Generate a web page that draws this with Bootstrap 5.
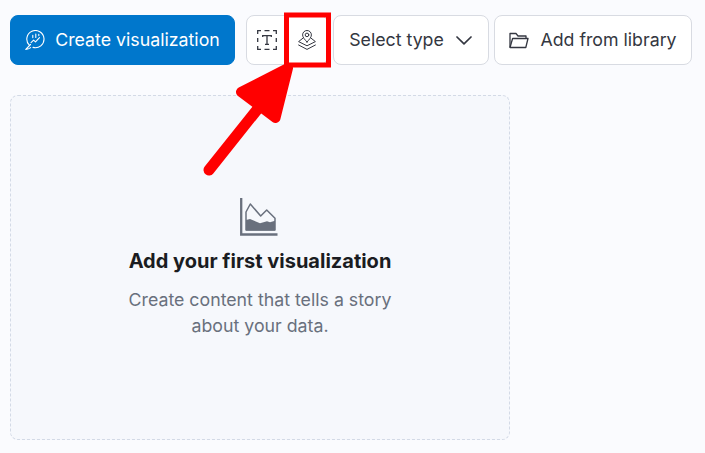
<!DOCTYPE html>
<html lang="en">
<head>
<meta charset="utf-8">
<title>Add visualization</title>
<link rel="stylesheet" href="https://cdn.jsdelivr.net/npm/bootstrap@5.3.0/dist/css/bootstrap.min.css">
<style>
html, body { height: 100%; overflow: hidden; }
body { font-family: Inter, "Liberation Sans", sans-serif; background: #fafbfe; color: #343741; position: relative; }
.tool-bar { padding: 15px 13px 0 10px; gap: 0; }
.tb-btn { height: 50px; font-size: 17.75px; line-height: 1; padding: 0; border-radius: 8px; display: inline-flex; align-items: center; justify-content: center; background: #fff; border: 1px solid #d8dbe2; color: #343741; }
.tb-btn:hover { background: #fff; color: #343741; border-color: #d8dbe2; }
.tb-primary { width: 225px; background: #0077cc; border-color: #0077cc; color: #fff; gap: 10px; }
.tb-primary:hover { background: #0077cc; border-color: #0077cc; color: #fff; }
.tb-group { margin-left: 11px; width: 82px; }
.tb-group .tb-btn { flex: 1 1 0; }
.tb-type { width: 156px; margin-left: 5px; gap: 12px; padding-right: 1px; }
.tb-lib { width: 198px; margin-left: 5px; gap: 11px; }
.drop-zone { margin: 30px 0 0 10px; width: 500px; height: 345px; background: #f6f8fc; border: 1px dashed #d3dae6; border-radius: 8px; padding-top: 102px; }
.drop-title { font-size: 20px; font-weight: 700; color: #1a1c21; line-height: 24px; margin: 13px 0 0; }
.drop-text { font-size: 17.75px; line-height: 26px; color: #69707d; margin: 14px 0 0; }
.chart-ico { display: block; margin: 0 auto; transform: translateX(-1px); }
.callout { position: absolute; left: 0; top: 0; pointer-events: none; }
</style>
</head>
<body>
<div class="d-flex align-items-center tool-bar">
  <button type="button" class="btn tb-btn tb-primary">
    <svg width="20" height="20" viewBox="0 0 20 20" fill="none" stroke="#fff" stroke-width="1.100" stroke-linecap="round" stroke-linejoin="round"><path d="M4.300 15.200A8.600 8.600 0 1 1 8 17.400"/><path d="M5.500 14.500 .8 19.400M.8 19.400c2-.1 3.500-.7 4.800-1.800"/><path d="M6 12.600l2.600-2.400 1.900 1.700 4-4.200"/><path d="M7.800 5.400v2.200M10.800 4v3.400M13.800 4.200v1.400"/></svg>
    <span>Create visualization</span>
  </button>
  <div class="btn-group tb-group" role="group">
    <button type="button" class="btn tb-btn" aria-label="Add text">
      <svg width="20" height="20" viewBox="0 0 20 20" fill="none" stroke="#343741" stroke-width="1.300"><path d="M.7 4V.7H4M7.500.7h5M16 .7h3.300V4M19.300 8v4M19.300 16v3.300H16M12.500 19.300h-5M4 19.300H.7V16M.7 12V8"/><path d="M5.700 7V5.600h8.600V7M10 5.600v8.800M8 14.400h4"/></svg>
    </button>
    <button type="button" class="btn tb-btn" aria-label="Add map">
      <svg width="18" height="20" viewBox="0 0 18 20" fill="none" stroke="#343741" stroke-width="1" stroke-linejoin="round" stroke-linecap="round"><path d="M9 12C6.900 9.600 4.600 7.500 4.600 4.900a4.400 4.400 0 0 1 8.800 0c0 2.600-2.300 4.700-4.400 7.100Z"/><circle cx="9" cy="4.900" r="1.800"/><path d="M4.800 8.300.6 11.600 9 15.800l8.400-4.200-4.200-3.300"/><path d="M.6 15 9 19.400l8.400-4.400"/></svg>
    </button>
  </div>
  <button type="button" class="btn tb-btn tb-type">
    <span>Select type</span>
    <svg width="16" height="9" viewBox="0 0 16 9" fill="none" stroke="#343741" stroke-width="1.700" stroke-linecap="round" stroke-linejoin="round"><path d="M1 1l7 6.800L15 1"/></svg>
  </button>
  <button type="button" class="btn tb-btn tb-lib">
    <svg width="20" height="17" viewBox="0 0 20 17" fill="none" stroke="#343741" stroke-width="1.300" stroke-linejoin="round"><path d="M1 15.500V1.500h6l2 2.500h8v2.500"/><path d="M1 15.500h15.800L19 6.500H3.600L1 15.500Z"/></svg>
    <span>Add from library</span>
  </button>
</div>
<div class="drop-zone text-center">
  <svg class="chart-ico" width="38" height="38" viewBox="0 0 38 38" fill="none"><path d="M1.200 0v36.500H37.500" stroke="#69707d" stroke-width="2.300"/><path d="M6 32V14L10.300 6l10.400 12 6-6L35 20.300V32Z" stroke="#69707d" stroke-width="1.500" stroke-linejoin="round"/><path d="M6 32.500V22l4-1 10 4.300 7-2 3 1 5-1.600v9.800Z" fill="#69707d"/></svg>
  <h1 class="drop-title">Add your first visualization</h1>
  <p class="drop-text">Create content that tells a story<br>about your data.</p>
</div>
<svg class="callout" width="705" height="453" viewBox="0 0 705 453" fill="none">
  <rect x="286.500" y="15" width="42" height="50" stroke="#f00" stroke-width="5"/>
  <path d="M209 170 268 96" stroke="#f00" stroke-width="11" stroke-linecap="round"/>
  <path d="M288 68 241 92 275.500 118Z" fill="#f00" stroke="#f00" stroke-width="10" stroke-linejoin="round"/>
</svg>
<script src="https://cdn.jsdelivr.net/npm/bootstrap@5.3.0/dist/js/bootstrap.bundle.min.js"></script>
</body>
</html>
